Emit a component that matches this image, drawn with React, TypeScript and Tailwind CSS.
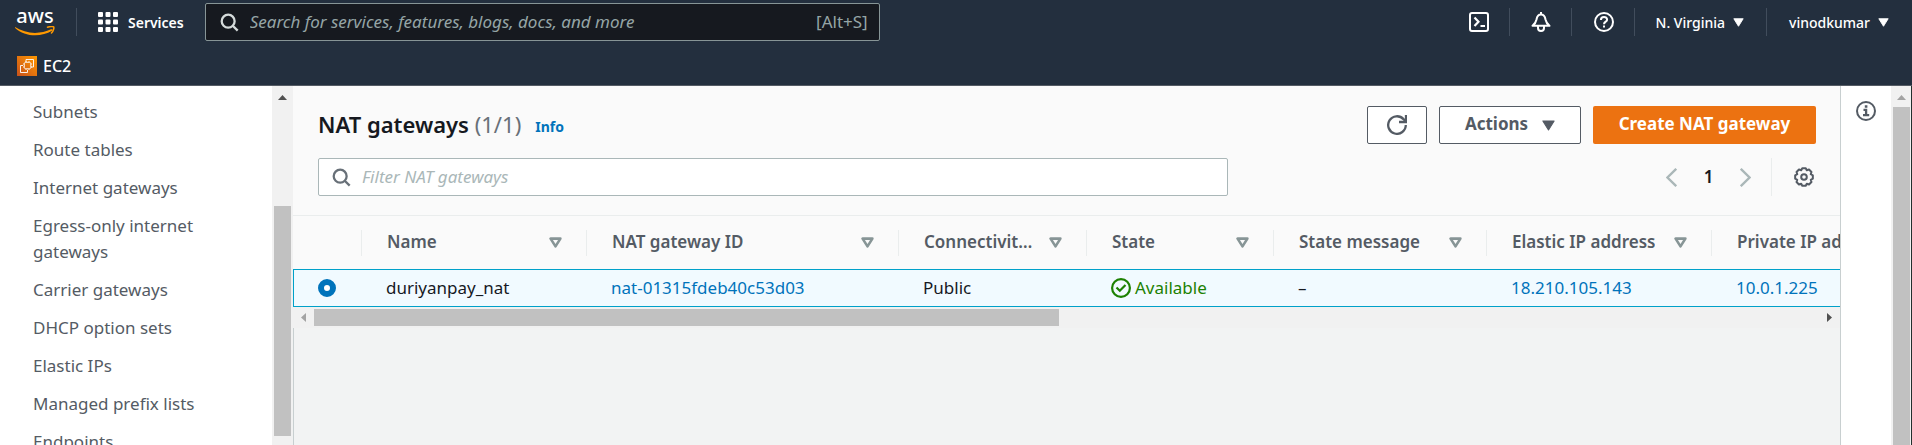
import type { ReactNode } from "react";

const navItems = [
  "Subnets",
  "Route tables",
  "Internet gateways",
  "Egress-only internet gateways",
  "Carrier gateways",
  "DHCP option sets",
  "Elastic IPs",
  "Managed prefix lists",
  "Endpoints",
];

const columns = [
  { label: "Name", width: "w-[225px]" },
  { label: "NAT gateway ID", width: "w-[312px]" },
  { label: "Connectivity type", width: "w-[188px]" },
  { label: "State", width: "w-[187px]" },
  { label: "State message", width: "w-[213px]" },
  { label: "Elastic IP address", width: "w-[225px]" },
  { label: "Private IP address", width: "w-[225px]" },
];

const gearOutline = Array.from({ length: 8 }, (_, tooth) => {
  const point = (degrees: number, radius: number) => {
    const angle = ((tooth * 45 + degrees) * Math.PI) / 180;
    return `${(10 + radius * Math.sin(angle)).toFixed(2)} ${(10 - radius * Math.cos(angle)).toFixed(2)}`;
  };
  return `${tooth === 0 ? "M" : "L"}${point(-11, 9)}L${point(11, 9)}L${point(22.5, 7.3)}`;
}).join("");

function SearchIcon({ className }: { className: string }) {
  return (
    <svg viewBox="0 0 20 20" className={className} fill="none" stroke="currentColor" strokeWidth="2.4" aria-hidden="true">
      <circle cx="8.6" cy="8.6" r="6.8" />
      <path d="M13.4 13.4 18.6 18.6" />
    </svg>
  );
}

function Caret({ className }: { className: string }) {
  return (
    <svg viewBox="0 0 12 10" className={className} fill="currentColor" stroke="currentColor" strokeLinejoin="round" aria-hidden="true">
      <path d="M.8.8h10.4L6 9.2z" />
    </svg>
  );
}

function SortIcon() {
  return (
    <svg viewBox="0 0 13 11" className="h-[11px] w-[13px] shrink-0" fill="none" stroke="#879596" strokeWidth="2.600" strokeLinejoin="round" aria-hidden="true">
      <path d="M1.6 1.600h9.800L6.500 9.400z" />
    </svg>
  );
}

function Divider() {
  return <div className="h-7 w-px bg-[#414d5c]" />;
}

function IconButton({ label, children }: { label: string; children: ReactNode }) {
  return (
    <button type="button" aria-label={label} className="flex size-5 items-center justify-center">
      {children}
    </button>
  );
}

function TopBar() {
  return (
    <header className="h-[86px] shrink-0 border-b border-[#545b64] bg-[#232f3e] text-white">
      <div className="flex h-11 items-center">
        <a href="#home" className="ml-[15px] flex w-10 flex-col items-center">
          <span className="h-[18px] text-[20px] leading-[16px] font-medium">aws</span>
          <svg viewBox="0 0 40 10" className="h-[10px] w-10" fill="none" stroke="#ff9900" aria-hidden="true">
            <path d="M0 1.1C11 8.2 25 8.6 36 3.3 37.2 2.8 38.2 4 37 4.8 26 11.4 9.6 10.8.1 1.9-.3 1.4-.2 1 .2 1.200z" fill="#ff9900" stroke="none" />
            <path d="M32.5 1.3c2.3-1 5.7-.9 6.2-.4.5.6-.2 4.2-2.2 6.1" strokeWidth="1.500" strokeLinecap="round" />
          </svg>
        </a>
        <div className="ml-[21px]">
          <Divider />
        </div>
        <button type="button" className="ml-[21px] flex items-center gap-[10px] text-[14px] font-semibold">
          <svg viewBox="0 0 20 20" className="size-5" fill="currentColor" aria-hidden="true">
            {[0, 7.5, 15].map((y) =>
              [0, 7.5, 15].map((x) => <rect key={`${x}-${y}`} x={x} y={y} width="5" height="5" rx="1" />)
            )}
          </svg>
          Services
        </button>
        <label className="ml-[21px] flex h-[38px] w-[675px] items-center rounded-xs border border-[#879596] bg-[#16191f] pr-[11px] pl-[14px] text-[#95a5a6]">
          <SearchIcon className="size-[19px] shrink-0 text-[#d5dbdb]" />
          <input
            type="search"
            aria-label="Search"
            placeholder="Search for services, features, blogs, docs, and more"
            className="ml-[11px] min-w-0 flex-1 bg-transparent text-[17px] outline-none placeholder:text-[#95a5a6] placeholder:italic"
          />
          <span className="text-[17px]">[Alt+S]</span>
        </label>
        <div className="ml-auto flex items-center pr-[23px]">
          <IconButton label="CloudShell">
            <svg viewBox="0 0 20 20" className="size-5" fill="none" stroke="currentColor" strokeWidth="2" aria-hidden="true">
              <rect x="1" y="1" width="18" height="18" rx="2" />
              <path d="m5.500 5.500 4 4.300-4 4.300M11.500 14h4.500" strokeWidth="2.200" />
            </svg>
          </IconButton>
          <div className="mr-[21px] ml-5"><Divider /></div>
          <IconButton label="Notifications">
            <svg viewBox="0 0 20 20" className="size-5" fill="none" stroke="currentColor" strokeWidth="2" strokeLinejoin="round" aria-hidden="true">
              <path d="M1.500 13.800C4.500 11.500 5 10 5.500 7.500 6 4.500 7.500 2.500 10 2.500s4 2 4.500 5c.5 2.500 1 4 4 6.300zM10 2.500V0M7 14.500v1.500c0 4 6 4 6 0v-1.500" />
            </svg>
          </IconButton>
          <div className="mr-[22px] ml-5"><Divider /></div>
          <IconButton label="Help">
            <svg viewBox="0 0 20 20" className="size-5" fill="none" stroke="currentColor" strokeWidth="2" aria-hidden="true">
              <circle cx="10" cy="10" r="9" />
              <path d="M6.900 8c0-4 6.200-4 6.200-.3 0 2-3.100 2-3.100 4.500M10 13.500v2" />
            </svg>
          </IconButton>
          <div className="mr-[21px] ml-5"><Divider /></div>
          <button type="button" className="flex items-center gap-2 text-[14px] font-medium">
            N. Virginia
            <Caret className="h-[9px] w-[11px]" />
          </button>
          <div className="mr-[22px] ml-[22px]"><Divider /></div>
          <button type="button" className="flex items-center gap-2 text-[14px] font-medium">
            vinodkumar
            <Caret className="h-[9px] w-[11px]" />
          </button>
        </div>
      </div>
      <a href="#ec2" className="ml-[17px] flex h-11 w-fit items-center gap-[6px] text-[16px] font-medium">
        <svg viewBox="0 0 20 20" className="size-5" fill="none" stroke="#fff" aria-hidden="true">
          <defs>
            <linearGradient id="ec2" x1="0" y1="1" x2="1" y2="0">
              <stop offset="0" stopColor="#c8511b" />
              <stop offset="1" stopColor="#ff9900" />
            </linearGradient>
          </defs>
          <path d="M0 0h20v20H0z" fill="url(#ec2)" stroke="none" />
          <path d="M6 9.500H3.500v7h7V14M9 6V3.500h7.500v7.500H14" strokeWidth=".9" />
          <rect x="7.300" y="6.300" width="6.500" height="6.500" rx="1.500" strokeWidth=".9" />
          <path d="M9 5v1M12 5v1M9 13v1M12 13v1M6 8h1M6 11h1M14 8h1M14 11h1" strokeWidth=".8" />
        </svg>
        EC2
      </a>
    </header>
  );
}

function Sidebar() {
  return (
    <div className="flex w-[293px] shrink-0 overflow-hidden bg-white">
      <nav aria-label="VPC" className="w-[272px] pt-[13px]">
        <ul className="flex flex-col gap-3 pr-12 pl-[33px] text-[17px] leading-[26px] text-[#545b64]">
          {navItems.map((item) => (
            <li key={item}>
              <a href="#nav">{item}</a>
            </li>
          ))}
        </ul>
      </nav>
      <div className="flex w-[21px] flex-col items-center bg-[#f1f1f1] pb-[9px]">
        <svg viewBox="0 0 9 5" className="mt-[9px] h-[5px] w-[9px]" fill="#505050" aria-hidden="true">
          <path d="M4.500 0 9 5H0z" />
        </svg>
        <div className="mt-auto h-[230px] w-[17px] bg-[#c1c1c1]" />
      </div>
    </div>
  );
}

function PanelHeader() {
  return (
    <div className="border-b border-[#eaeded] pt-5 pr-6 pb-[19px] pl-[25px]">
      <div className="flex items-center">
        <h1 className="pb-[2px] text-[22px] leading-9 font-semibold text-[#16191f]">
          NAT gateways <span className="font-normal text-[#687078]">(1/1)</span>
        </h1>
        <a href="#info" className="mt-[2px] ml-[14px] text-[14px] font-bold text-[#0073bb]">
          Info
        </a>
        <div className="ml-auto flex gap-3 text-[17px] leading-9 font-bold">
          <button type="button" aria-label="Refresh" className="flex h-[38px] w-[60px] items-center justify-center rounded-xs border border-[#545b64] bg-white text-[#545b64]">
            <svg viewBox="0 0 20 20" className="size-5" fill="none" stroke="currentColor" strokeWidth="2.300" aria-hidden="true">
              <path d="M18.800 10A8.800 8.800 0 1 1 16.500 4.100L19 7" />
              <path d="M19 0v7h-7" />
            </svg>
          </button>
          <button type="button" className="flex h-[38px] w-[142px] items-center justify-center gap-[14px] rounded-xs border border-[#545b64] bg-white pb-[2px] text-[#545b64]">
            Actions
            <Caret className="mt-[2px] h-[11px] w-[13px]" />
          </button>
          <button type="button" className="h-[38px] w-[223px] rounded-xs bg-[#ec7211] pb-[2px] text-white">
            Create NAT gateway
          </button>
        </div>
      </div>
      <div className="mt-[14px] flex items-center justify-between">
        <label className="flex h-[38px] w-[910px] items-center rounded-xs border border-[#aab7b8] bg-white px-[13px]">
          <SearchIcon className="size-[19px] shrink-0 text-[#687078]" />
          <input
            type="search"
            aria-label="Filter NAT gateways"
            placeholder="Filter NAT gateways"
            className="ml-[11px] min-w-0 flex-1 bg-transparent text-[17px] outline-none placeholder:text-[#aab7b8] placeholder:italic"
          />
        </label>
        <div className="flex items-center pr-[2px]">
          <button type="button" aria-label="Previous page">
            <svg viewBox="0 0 11 19" className="h-[19px] w-[11px]" fill="none" stroke="#aab7b8" strokeWidth="2.300" aria-hidden="true">
              <path d="M10.200.8 1.500 9.500l8.700 8.700" />
            </svg>
          </button>
          <button type="button" className="w-[63px] text-center text-[17px] font-semibold text-[#16191f]">1</button>
          <button type="button" aria-label="Next page">
            <svg viewBox="0 0 11 19" className="h-[19px] w-[11px]" fill="none" stroke="#aab7b8" strokeWidth="2.300" aria-hidden="true">
              <path d="m.8.8 8.700 8.700-8.700 8.700" />
            </svg>
          </button>
          <div className="mr-[22px] ml-5 h-[38px] w-px bg-[#eaeded]" />
          <button type="button" aria-label="Preferences">
            <svg viewBox="0 0 20 20" className="size-5" fill="none" stroke="#545b64" strokeWidth="2" strokeLinejoin="round" aria-hidden="true">
              <path d={`${gearOutline}Z`} />
              <circle cx="10" cy="10" r="2.800" />
            </svg>
          </button>
        </div>
      </div>
    </div>
  );
}

function GatewayTable() {
  return (
    <div className="overflow-hidden">
      <table className="w-[1643px] table-fixed border-separate border-spacing-0 text-left text-[17px]">
        <thead>
          <tr className="h-[53px] text-[#545b64]">
            <th className="w-[68px] p-0" aria-label="Selection" />
            {columns.map((column) => (
              <th key={column.label} className={`${column.width} p-0 font-semibold`}>
                <div className="flex h-[26px] items-center justify-between gap-3 border-l border-[#eaeded] pr-6 pl-[25px]">
                  <span className="truncate pb-[2px]">{column.label}</span>
                  <SortIcon />
                </div>
              </th>
            ))}
          </tr>
        </thead>
        <tbody>
          <tr className="h-[38px] bg-[#f1faff] text-[#16191f] *:border-y *:border-[#00a1c9]">
            <td className="border-l p-0 pl-6">
              <input
                type="radio"
                name="gateway"
                defaultChecked
                aria-label="Select duriyanpay_nat"
                className="block size-[18px] appearance-none rounded-full border-[6px] border-[#0073bb] bg-white"
              />
            </td>
            <td className="p-0 pl-[25px]">duriyanpay_nat</td>
            <td className="p-0 pl-[25px]">
              <a href="#gateway" className="text-[#0073bb]">nat-01315fdeb40c53d03</a>
            </td>
            <td className="p-0 pl-[25px]">Public</td>
            <td className="p-0 pl-[25px]">
              <span className="flex items-center gap-1 text-[#1d8102]">
                <svg viewBox="0 0 20 20" className="size-5" fill="none" stroke="currentColor" strokeWidth="2.200" aria-hidden="true">
                  <circle cx="10" cy="10" r="8.900" />
                  <path d="m5.500 9.500 3.300 3.300L14.500 7" />
                </svg>
                Available
              </span>
            </td>
            <td className="p-0 pl-[25px]">–</td>
            <td className="p-0 pl-[25px]">
              <a href="#ip" className="text-[#0073bb]">18.210.105.143</a>
            </td>
            <td className="p-0 pl-[25px]">
              <a href="#private-ip" className="text-[#0073bb]">10.0.1.225</a>
            </td>
          </tr>
        </tbody>
      </table>
    </div>
  );
}

export default function App() {
  return (
    <div className="flex h-screen flex-col overflow-hidden bg-white font-['Noto_Sans',sans-serif]">
      <TopBar />
      <div className="flex min-h-0 flex-1">
        <Sidebar />
        <main className="min-w-0 flex-1 border-x border-[#c8cfd0] bg-[#f2f3f3]">
          <section className="-ml-px bg-[#fafafa]">
            <PanelHeader />
            <GatewayTable />
            <div className="flex h-[21px] items-center bg-[#f1f1f1] pr-2 pl-2">
              <svg viewBox="0 0 5 9" className="h-[9px] w-[5px]" fill="#a3a3a3" aria-hidden="true">
                <path d="M5 0v9L0 4.500z" />
              </svg>
              <div className="mr-auto ml-2 h-[17px] w-[745px] bg-[#c1c1c1]" />
              <svg viewBox="0 0 5 9" className="h-[9px] w-[5px]" fill="#505050" aria-hidden="true">
                <path d="M0 0v9l5-4.500z" />
              </svg>
            </div>
          </section>
        </main>
        <aside className="flex w-[50px] justify-center pt-[15px]">
          <button type="button" aria-label="Open info panel" className="size-5">
            <svg viewBox="0 0 20 20" className="size-5" fill="none" stroke="#545b64" strokeWidth="2" aria-hidden="true">
              <circle cx="10" cy="10" r="9" />
              <path d="M8.800 5.500h2.600M7.500 8.800h2.600v5.200M7 14.200h6.200" strokeWidth="2.300" />
            </svg>
          </button>
        </aside>
        <div className="flex w-5 flex-col items-center bg-[#f1f1f1]">
          <svg viewBox="0 0 9 5" className="my-[7px] mt-[9px] h-[5px] w-[9px] shrink-0" fill="#a3a3a3" aria-hidden="true">
            <path d="M4.500 0 9 5H0z" />
          </svg>
          <div className="w-[17px] flex-1 bg-[#c1c1c1]" />
        </div>
        <div className="w-px bg-[#232f2e]" />
      </div>
    </div>
  );
}
